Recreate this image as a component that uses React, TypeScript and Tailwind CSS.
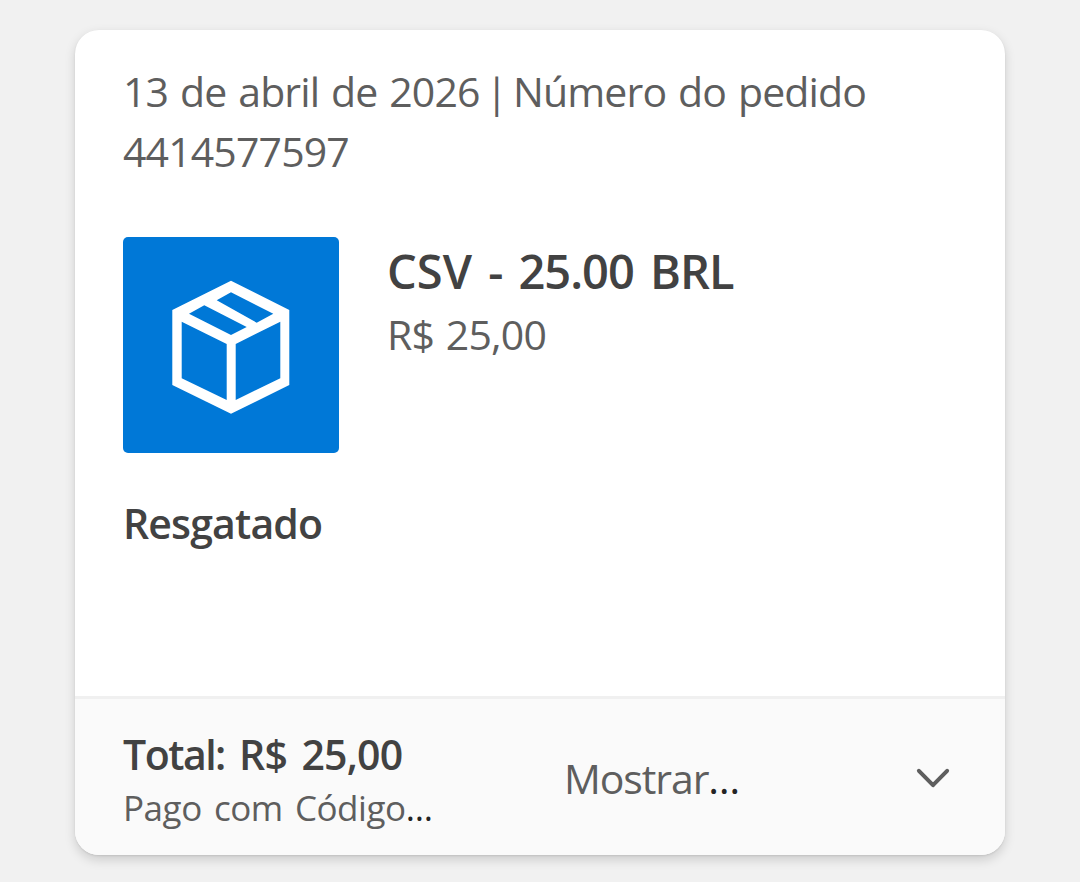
import React from 'react';

const BoxIcon: React.FC = () => (
  <svg viewBox="0 0 216 216" className="w-[216px] h-[216px]" aria-hidden="true">
    <path
      fill="#fff"
      fillRule="evenodd"
      d="M108 43.7 166.3 73V148L108 176.7 49.3 148V73ZM58.7 84.7V141.3L103.7 163V107ZM157.3 84.7 112.7 107V163L157.3 141.3ZM108 55.3 93.7 63.3 133.7 85.7 150.3 76.7ZM81.3 68.3 66 76.7 108 98 123.7 90Z"
    />
  </svg>
);

const ChevronIcon: React.FC = () => (
  <svg
    viewBox="0 0 36 24"
    className="mr-1.5 w-9 h-6"
    fill="none"
    stroke="#5e5e5e"
    strokeWidth="4"
    strokeLinecap="round"
    strokeLinejoin="round"
    aria-hidden="true"
  >
    <path d="M3.9 4.8 18 19.2 32.1 4.8" />
  </svg>
);

const App: React.FC = () => {
  return (
    <div className="h-[882px] overflow-hidden bg-[#f1f1f1] px-[75px] pt-[30px] font-['Open_Sans','Noto_Sans',sans-serif] text-[41px] tracking-[-0.85px] [word-spacing:2px] text-[#5e5e5e]">
      <article className="flex h-[825px] flex-col overflow-hidden rounded-3xl bg-white shadow-[0_4.8px_10.8px_rgba(0,0,0,0.15),0_1px_2px_rgba(0,0,0,0.09)]">
        <div className="flex-1 px-12 pt-[31px]">
          <p className="leading-[60px] whitespace-nowrap">
            13 de abril de 2026<span className="[word-spacing:-4px]"> | </span>Número do pedido
            <br />
            4414577597
          </p>

          <div className="mt-14 flex gap-12">
            <div className="h-[216px] w-[216px] rounded-[5px] bg-[#0078d7]">
              <BoxIcon />
            </div>
            <div className="pt-0.5 whitespace-nowrap">
              <h2 className="mb-px text-[47px] leading-[64px] font-semibold tracking-[-1px] [word-spacing:5px] text-[#424242]">
                <span className="tracking-normal">CSV</span> - 25.00 BRL
              </h2>
              <p className="leading-[60px]">R$ 25,00</p>
            </div>
          </div>

          <p className="mt-10 leading-[60px] font-semibold text-[#424242]">Resgatado</p>
        </div>

        <button
          type="button"
          className="flex h-[159px] items-center border-t-3 border-[#f0f0f0] bg-[#fafafa] px-12 pt-0.5 text-left whitespace-nowrap"
        >
          <span className="block w-[441px]">
            <span className="block leading-[60px] font-semibold tracking-[-0.8px] text-[#424242]">
              <span className="tracking-[-1.5px] [word-spacing:5px]">Total: </span>
              <span className="[word-spacing:4.5px]">R$ 25,00</span>
            </span>
            <span className="block text-[35px] leading-12 tracking-[-0.45px] [word-spacing:3.5px]">
              Pago com Código<span className="tracking-normal text-[#242424]">…</span>
            </span>
          </span>
          <span className="flex-1 leading-[60px] tracking-[-1.1px]">
            Mostrar<span className="text-[#242424]">…</span>
          </span>
          <ChevronIcon />
        </button>
      </article>
    </div>
  );
};

export default App;
